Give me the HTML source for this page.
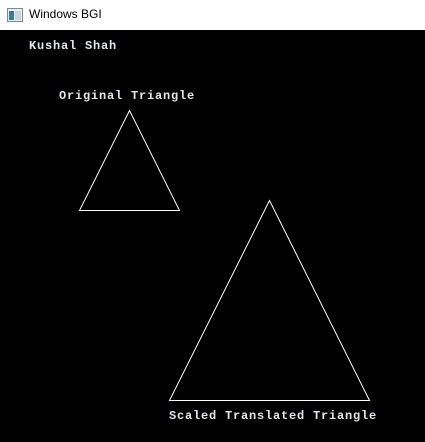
<!DOCTYPE html>
<html><head><style>
body{margin:0;width:425px;height:442px;overflow:hidden;background:#000;font-family:"Liberation Sans",sans-serif}
#tb{position:absolute;left:0;top:0;width:425px;height:30px;background:#fff}
#tb span{position:absolute;left:29px;top:7px;font-size:12px;color:#000}
.t{position:absolute;font-family:"Liberation Mono",monospace;font-weight:bold;font-size:12px;letter-spacing:0.8px;color:#dfe8f0;white-space:pre;line-height:12px}
</style></head><body>
<div id="tb">
<svg width="16" height="14" style="position:absolute;left:7px;top:8px"><rect x="0.5" y="0.5" width="15" height="13" fill="#e8eef2" stroke="#7a8a96"/><rect x="2" y="3" width="5" height="9" fill="#3c7a9a"/><rect x="8" y="3" width="6" height="9" fill="#c8d4dc"/></svg>
<span>Windows BGI</span></div>
<div class="t" style="left:29px;top:40px">Kushal Shah</div>
<div class="t" style="left:59px;top:90px">Original Triangle</div>
<div class="t" style="left:169px;top:410px">Scaled Translated Triangle</div>
<svg width="425" height="442" style="position:absolute;left:0;top:0">
<polygon points="129.5,110.5 79.5,210.5 179.5,210.5" fill="none" stroke="#fff" stroke-width="1"/>
<polygon points="269.5,200.5 169.5,400.5 369.5,400.5" fill="none" stroke="#fff" stroke-width="1"/>
</svg>
</body></html>
